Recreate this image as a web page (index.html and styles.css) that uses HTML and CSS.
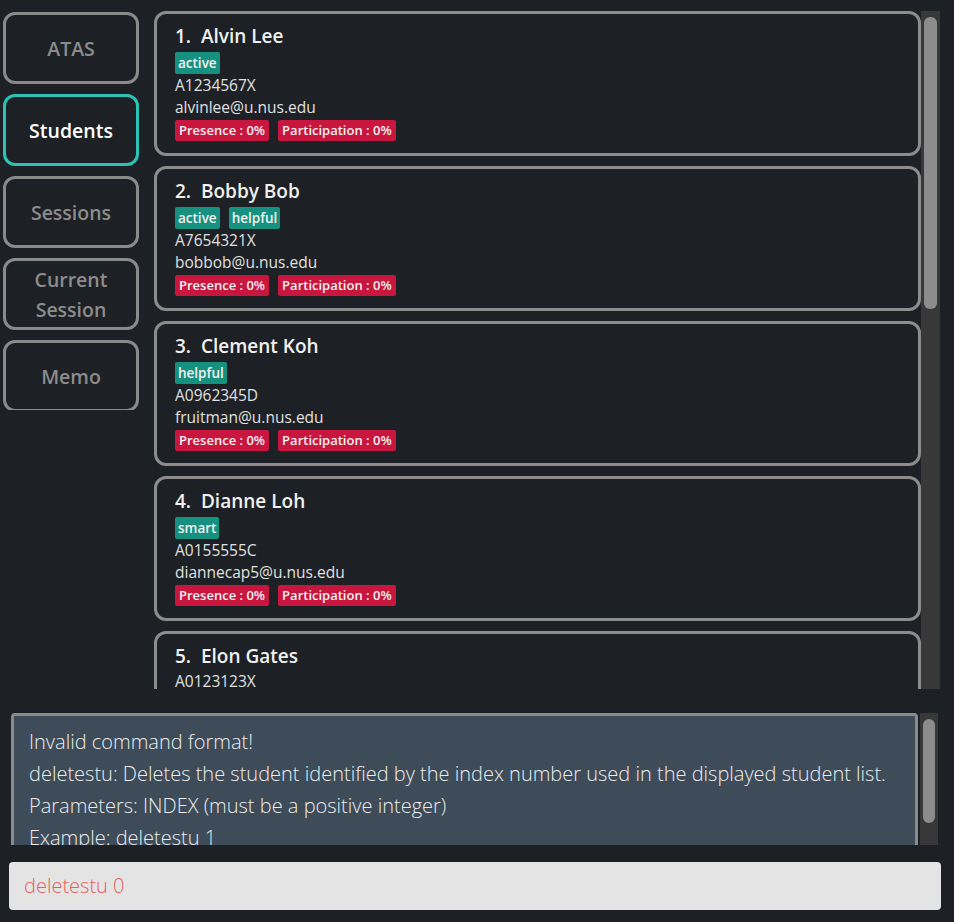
FILE: index.html
```html
<!DOCTYPE html>
<html lang="en">
<head>
  <meta charset="UTF-8" />
  <meta name="viewport" content="width=device-width, initial-scale=1.0" />
  <title>ATAS</title>
  <link rel="stylesheet" href="styles.css">
</head>
<body>
  <div class="app">
    <div class="top">
      <nav class="sidebar">
        <div class="nav-btn">ATAS</div>
        <div class="nav-btn selected">Students</div>
        <div class="nav-btn">Sessions</div>
        <div class="nav-btn">Current<br>Session</div>
        <div class="nav-btn">Memo</div>
      </nav>

      <section class="list-pane">
        <div class="list">
          <div class="card">
            <div class="name">1.&nbsp; Alvin Lee</div>
            <div class="tags"><span class="tag">active</span></div>
            <div class="line">A1234567X</div>
            <div class="line">alvinlee@u.nus.edu</div>
            <div class="stats"><span class="stat">Presence : 0%</span><span class="stat">Participation : 0%</span></div>
          </div>
          <div class="card">
            <div class="name">2.&nbsp; Bobby Bob</div>
            <div class="tags"><span class="tag">active</span><span class="tag">helpful</span></div>
            <div class="line">A7654321X</div>
            <div class="line">bobbob@u.nus.edu</div>
            <div class="stats"><span class="stat">Presence : 0%</span><span class="stat">Participation : 0%</span></div>
          </div>
          <div class="card">
            <div class="name">3.&nbsp; Clement Koh</div>
            <div class="tags"><span class="tag">helpful</span></div>
            <div class="line">A0962345D</div>
            <div class="line">fruitman@u.nus.edu</div>
            <div class="stats"><span class="stat">Presence : 0%</span><span class="stat">Participation : 0%</span></div>
          </div>
          <div class="card">
            <div class="name">4.&nbsp; Dianne Loh</div>
            <div class="tags"><span class="tag">smart</span></div>
            <div class="line">A0155555C</div>
            <div class="line">diannecap5@u.nus.edu</div>
            <div class="stats"><span class="stat">Presence : 0%</span><span class="stat">Participation : 0%</span></div>
          </div>
          <div class="card">
            <div class="name">5.&nbsp; Elon Gates</div>
            <div class="line">A0123123X</div>
            <div class="line">elongates@u.nus.edu</div>
            <div class="stats"><span class="stat">Presence : 0%</span><span class="stat">Participation : 0%</span></div>
          </div>
        </div>
        <div class="scrollbar"><div class="thumb list-thumb"></div></div>
      </section>
    </div>

    <section class="result-pane">
      <div class="result">
        <p>Invalid command format!</p>
        <p>deletestu: Deletes the student identified by the index number used in the displayed student list.</p>
        <p>Parameters: INDEX (must be a positive integer)</p>
        <p>Example: deletestu 1</p>
      </div>
      <div class="scrollbar"><div class="thumb result-thumb"></div></div>
    </section>

    <div class="command-box">deletestu 0</div>
  </div>
</body>
</html>
```

FILE: styles.css
```css
body {
  font-family: 'Open Sans', 'Noto Sans', sans-serif;
  margin: 0;
  padding: 0;
  background: #1d2025;
  color: #e6e6e6;
  overflow: hidden;
}
.app {
  width: 954px;
  height: 922px;
  display: flex;
  flex-direction: column;
}
.top {
  display: flex;
  height: 678px;
  padding-top: 11px;
}
.sidebar {
  width: 136px;
  margin-left: 3px;
  margin-right: 15px;
  height: 398px;
  padding-top: 1px;
  overflow: hidden;
  display: flex;
  flex-direction: column;
  gap: 10px;
}
.nav-btn {
  flex: none;
  height: 65px;
  box-sizing: content-box;
  border: 3px solid #8a8a8a;
  border-radius: 12px;
  display: flex;
  align-items: center;
  justify-content: center;
  text-align: center;
  padding-top: 1px;
  font-size: 19.5px;
  font-weight: 600;
  line-height: 30px;
  color: #8c8c8c;
}
.nav-btn.selected {
  border-color: #2cc3b5;
  color: #ffffff;
}
.list-pane {
  display: flex;
  width: 786px;
  height: 678px;
}
.list {
  width: 767px;
  overflow: hidden;
  display: flex;
  flex-direction: column;
  gap: 10px;
}
.card {
  flex: none;
  border: 3px solid #8c8c8c;
  border-radius: 12px;
  padding: 8px 18px 12px;
}
.name {
  font-size: 19px;
  font-weight: 600;
  line-height: 28px;
  color: #f0f0f0;
}
.tags, .stats {
  display: flex;
  gap: 9px;
  margin-top: 2px;
}
.tag, .stat {
  font-size: 13.5px;
  font-weight: 600;
  line-height: 22px;
  padding: 0 3px;
  border-radius: 2px;
  color: #f2f2f2;
}
.tag {
  background: #17917f;
}
.stat {
  background: #c8163e;
  font-size: 13px;
  line-height: 21px;
  padding: 0 4px;
}
.line {
  font-size: 15.5px;
  line-height: 22px;
  color: #e0e0e0;
}
.scrollbar {
  width: 19px;
  background: #383838;
  box-sizing: border-box;
  padding: 6px 3px;
}
.thumb {
  background: #8c8c8c;
  border-radius: 6px;
}
.list-thumb {
  height: 292px;
}
.result-pane {
  display: flex;
  margin-top: 24px;
  margin-left: 11px;
  height: 132px;
  gap: 2px;
}
.result {
  width: 907px;
  box-sizing: border-box;
  background: #3e4b59;
  border: 3px solid #8a8a8a;
  border-bottom: none;
  border-radius: 4px 4px 0 0;
  padding: 10px 15px 0;
  overflow: hidden;
  font-size: 20px;
  font-weight: 300;
  color: #ededed;
}
.result p {
  margin: 0;
  line-height: 32px;
  white-space: nowrap;
}
.result-pane .scrollbar {
  width: 18px;
}
.result-thumb {
  height: 104px;
}
.command-box {
  margin: 17px 13px 0 9px;
  height: 48px;
  background: #e4e4e4;
  border-radius: 4px;
  padding-left: 15px;
  font-size: 20px;
  font-weight: 300;
  line-height: 48px;
  color: #e0605c;
}
```
